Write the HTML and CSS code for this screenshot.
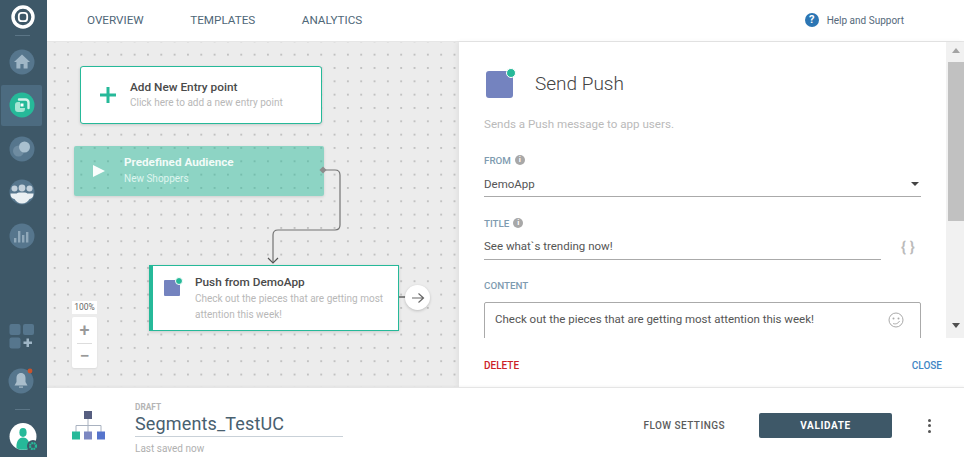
FILE: index.html
```html
<!DOCTYPE html>
<html lang="en">
<head>
  <meta charset="UTF-8" />
  <title>Segments_TestUC</title>
  <link rel="stylesheet" href="styles.css">
</head>
<body>
  <div class="app">
    <!-- left menu -->
    <nav class="sidebar">
      <div class="logo">
        <svg width="24" height="24" viewBox="0 0 24 24"><circle cx="12" cy="12" r="10" fill="none" stroke="#fff" stroke-width="3.4"/><rect x="7.8" y="7.8" width="8.4" height="8.4" rx="3" fill="none" stroke="#fff" stroke-width="1.8"/></svg>
      </div>
      <div class="side-sep"></div>
      <div class="side-item">
        <svg width="26" height="26" viewBox="0 0 26 26"><circle cx="13" cy="13" r="12.5" fill="#56768d"/><path d="M13 5.5 5 13h2.4v6.5h4v-4.5h3.2v4.5h4V13H21z" fill="#9fb6c6"/></svg>
      </div>
      <div class="side-item active">
        <svg width="26" height="26" viewBox="0 0 26 26"><circle cx="13" cy="13" r="12.5" fill="#26b999"/><path d="M10 7.500h6.500a3 3 0 0 1 3 3V16" fill="none" stroke="#d2f3ea" stroke-width="2.400" stroke-linecap="round"/><path d="M11 10h-2a3 3 0 0 0-3 3v4a3 3 0 0 0 3 3h4a3 3 0 0 0 3-3v-1h-5z" fill="#a5e6d4"/><rect x="11.500" y="11.500" width="3" height="3" fill="#fff"/></svg>
      </div>
      <div class="side-item">
        <svg width="26" height="26" viewBox="0 0 26 26"><circle cx="13" cy="13" r="12.5" fill="#56768d"/><circle cx="9.500" cy="15" r="5.500" fill="#6f8ca1"/><circle cx="15.500" cy="11" r="5.500" fill="#a9c0cf"/></svg>
      </div>
      <div class="side-item">
        <svg width="26" height="26" viewBox="0 0 26 26"><circle cx="13" cy="13" r="12.5" fill="#56768d"/><circle cx="5.500" cy="9.500" r="3" fill="#c3d1db"/><circle cx="20.500" cy="9.500" r="3" fill="#c3d1db"/><circle cx="13" cy="9" r="3.400" fill="#c3d1db"/><path d="M1.500 14.500h6.200c.8-.8 1.800-1 3-1h4.600c1.200 0 2.200.2 3 1h6.200c0 4-1.800 5-4 5.500-1.500 2.500-4 4.500-7.500 4.500S7 22.500 5.500 20c-2.200-.5-4-1.500-4-5.500z" fill="#eaf0f3"/></svg>
      </div>
      <div class="side-item">
        <svg width="26" height="26" viewBox="0 0 26 26"><circle cx="13" cy="13" r="12.5" fill="#56768d"/><g fill="#8fa8b9"><rect x="5" y="15" width="2.400" height="4.500"/><rect x="9" y="8" width="2.400" height="11.500"/><rect x="13" y="12" width="2.400" height="7.500"/><rect x="17" y="9" width="2.400" height="10.500"/></g></svg>
      </div>
      <div class="side-bottom">
        <div class="side-item plain">
          <svg width="26" height="26" viewBox="0 0 26 26"><g fill="#56768d"><rect x="0.500" y="0" width="11" height="11" rx="2"/><rect x="14" y="0" width="11" height="11" rx="2"/><rect x="0.500" y="13.500" width="11" height="11" rx="2"/></g><path d="M17.500 14.500h2.500v3h3V20h-3v3h-2.500v-3h-3v-2.500h3z" fill="#9fb6c6"/></svg>
        </div>
        <div class="side-item bell">
          <svg width="28" height="28" viewBox="0 0 28 28"><circle cx="13" cy="15" r="12.500" fill="#56768d"/><path d="M13 7c-3.200 0-4.500 2.500-4.500 5v4L6.500 19.500h13L17.500 16v-4c0-2.500-1.300-5-4.500-5z" fill="#a9bdcb"/><rect x="11" y="20.500" width="4" height="1.200" fill="#a9bdcb"/><circle cx="22" cy="5" r="2.400" fill="#c9532c"/></svg>
        </div>
        <div class="side-sep low"></div>
        <div class="avatar">
          <svg width="32" height="32" viewBox="0 0 32 32"><circle cx="14" cy="14.500" r="13.500" fill="#fff"/><ellipse cx="14" cy="10.500" rx="3.600" ry="4.400" fill="#26b999"/><path d="M7.500 26c-.5-6 2-10.500 6.500-10.500s7 4.500 6.500 10.500c-2 1.500-4 1.800-6.500 1.800s-4.500-.3-6.500-1.800z" fill="#26b999"/><circle cx="24" cy="24" r="6" fill="#3e5868"/><circle cx="24" cy="24" r="3" fill="none" stroke="#26b999" stroke-width="2.200" stroke-dasharray="1.800 .6"/></svg>
        </div>
      </div>
    </nav>

    <div class="main">
      <header class="topbar">
        <div class="tabs">
          <a class="tab">OVERVIEW</a>
          <a class="tab">TEMPLATES</a>
          <a class="tab">ANALYTICS</a>
        </div>
        <div class="help">
          <span class="help-icon">?</span>
          <span>Help and Support</span>
        </div>
      </header>

      <div class="work">
        <!-- flow canvas -->
        <section class="canvas">
          <div class="node entry">
            <span class="entry-plus">
              <svg width="16" height="16" viewBox="0 0 16 16"><path d="M6.500 0h3v6.500H16v3H9.500V16h-3V9.500H0v-3h6.500z" fill="#26b999"/></svg>
            </span>
            <div>
              <div class="node-title">Add New Entry point</div>
              <div class="node-sub">Click here to add a new entry point</div>
            </div>
          </div>

          <div class="node audience">
            <span class="play"></span>
            <div>
              <div class="node-title">Predefined Audience</div>
              <div class="node-sub">New Shoppers</div>
            </div>
          </div>

          <svg class="wires" width="412" height="345" viewBox="0 0 412 345">
            <path d="M276 128h12q5 0 5 5v50q0 5-5 5h-57q-5 0-5 5v28" fill="none" stroke="#737373" stroke-width="1.200"/>
            <path d="M221 216l5 5 5-5" fill="none" stroke="#555" stroke-width="1.200"/>
            <rect x="273.500" y="125.500" width="5" height="5" transform="rotate(45 276 128)" fill="#8d8d8d"/>
            <path d="M352 255h7" stroke="#444" stroke-width="1.200"/>
          </svg>

          <div class="node push">
            <span class="push-icon small"></span>
            <div>
              <div class="node-title">Push from DemoApp</div>
              <div class="node-sub">Check out the pieces that are getting most<br>attention this week!</div>
            </div>
          </div>

          <div class="next">
            <svg width="14" height="12" viewBox="0 0 14 12"><path d="M1 6h11M7.500 1.500 12.500 6l-5 4.500" fill="none" stroke="#666" stroke-width="1.200"/></svg>
          </div>

          <div class="zoom">
            <div class="zoom-level">100%</div>
            <div class="zoom-btns">
              <span class="zoom-btn">+</span>
              <span class="zoom-line"></span>
              <span class="zoom-btn">&minus;</span>
            </div>
          </div>
        </section>

        <!-- settings of the selected step -->
        <aside class="panel">
          <div class="panel-scroll">
            <div class="panel-body">
              <div class="panel-head">
                <span class="push-icon"></span>
                <h2>Send Push</h2>
              </div>
              <p class="panel-desc">Sends a Push message to app users.</p>

              <label class="field-label">FROM <span class="info">i</span></label>
              <div class="select">
                <span>DemoApp</span>
                <span class="caret"></span>
              </div>

              <label class="field-label title-label">TITLE <span class="info">i</span></label>
              <div class="title-row">
                <div class="text-line">See what`s trending now!</div>
                <span class="braces">{ }</span>
              </div>

              <label class="field-label content-label">CONTENT</label>
              <div class="textbox">
                <span>Check out the pieces that are getting most attention this week!</span>
                <svg width="16" height="16" viewBox="0 0 16 16"><circle cx="8" cy="8" r="7" fill="none" stroke="#aaa" stroke-width="1"/><circle cx="5.500" cy="6.500" r="1" fill="#aaa"/><circle cx="10.500" cy="6.500" r="1" fill="#aaa"/><path d="M5 11.500c2 .8 5 .5 6.500-2.500" fill="none" stroke="#aaa"/></svg>
              </div>
            </div>
            <div class="scrollbar">
              <span class="arrow up"></span>
              <span class="thumb"></span>
              <span class="arrow down"></span>
            </div>
          </div>
          <div class="panel-foot">
            <a class="delete">DELETE</a>
            <a class="close">CLOSE</a>
          </div>
        </aside>
      </div>

      <footer class="bottombar">
        <svg class="flow-icon" width="33" height="29" viewBox="0 0 33 29">
          <path d="M16 8v13M4 21v-6.500h25V21" fill="none" stroke="#a9b2c0" stroke-width="1"/>
          <rect x="12" y="0" width="8" height="8" fill="#565e80"/>
          <rect x="0" y="20.500" width="8" height="8" fill="#26b999"/>
          <rect x="12" y="20.500" width="8" height="8" fill="#7c88c2"/>
          <rect x="25" y="20.500" width="8" height="8" fill="#5674cc"/>
        </svg>
        <div class="flow-name">
          <div class="draft">DRAFT</div>
          <div class="flow-title">Segments_TestUC</div>
          <div class="saved">Last saved now</div>
        </div>
        <div class="actions">
          <a class="settings">FLOW SETTINGS</a>
          <button class="validate">VALIDATE</button>
          <span class="dots"><i></i><i></i><i></i></span>
        </div>
      </footer>
    </div>
  </div>
</body>
</html>
```

FILE: styles.css
```css
* { box-sizing: border-box; }
html, body { margin: 0; height: 100%; overflow: hidden; }
body { font-family: Roboto, Arial, sans-serif; background: #fff; color: #444; }
.app { display: flex; width: 964px; height: 457px; }

/* left menu */
.sidebar { width: 47px; flex: none; background: #3e5868; display: flex; flex-direction: column; align-items: stretch; padding: 5px 0 0 1px; }
.logo { height: 24px; display: flex; justify-content: center; padding-right: 2px; }
.side-sep { width: 15px; height: 1px; background: #5b7586; margin: 6px 0 0 14px; }
.side-item { height: 41px; width: 41px; margin-top: 2.600px; display: flex; align-items: center; justify-content: center; border-radius: 2px; flex: none; }
.side-sep + .side-item { margin-top: 5px; }
.side-item.active { background: #4c6b80; }
.side-bottom { margin-top: auto; display: flex; flex-direction: column; }
.side-item.plain { height: 26px; margin: 0 0 16px; }
.side-item.bell { height: 28px; margin: 0 0 15px; padding-left: 1px; }
.side-sep.low { margin: 0 0 12px 14px; }
.avatar { height: 35px; padding-left: 8px; }

.main { flex: 1; min-width: 0; display: flex; flex-direction: column; }

/* top bar */
.topbar { height: 42px; flex: none; display: flex; align-items: center; justify-content: space-between; padding: 0 60px 1px 40px; border-bottom: 1px solid #e6e6e6; }
.tabs { display: flex; gap: 46.500px; }
.tab { font-size: 11.700px; color: #4f6778; }
.help { display: flex; align-items: center; gap: 8px; font-size: 10px; color: #55697a; }
.help-icon { width: 14px; height: 14px; border-radius: 50%; background: #2c76b4; color: #fff; font-size: 11px; font-weight: 700; text-align: center; line-height: 14px; }

.work { flex: 1; min-height: 0; display: flex; }

/* flow canvas */
.canvas { position: relative; width: 412px; flex: none; background-color: #ececec; background-image: radial-gradient(circle, #a2a2a2 0.5px, transparent 0.9px); background-size: 13.33px 13.33px; background-position: 1px 6px; overflow: hidden; }
.node { position: absolute; display: flex; align-items: center; }
.node-title { font-size: 11.800px; font-weight: 500; color: #4a4a4a; }
.node-sub { font-size: 10px; color: #b8b8b8; margin-top: 4px; line-height: 16px; }
.entry { left: 33px; top: 24px; width: 242px; height: 58px; background: #fff; border: 1px solid #26b999; border-radius: 3px; box-shadow: 0 1px 3px rgba(0,0,0,.15); padding-left: 19px; gap: 14px; }
.entry-plus { display: flex; }
.entry .node-sub { margin-top: 1px; }
.audience { left: 27px; top: 104px; width: 250px; height: 50px; background: rgba(38,185,153,.48); border-radius: 2px; box-shadow: 0 1px 3px rgba(0,0,0,.12); padding: 0 0 0 19px; gap: 19px; }
.audience .node-title { color: #f2fbf8; font-weight: 700; font-size: 11.700px; }
.audience .node-sub { color: #dff5ef; margin-top: 2px; }
.play { width: 0; height: 0; border-left: 12px solid #fbfefd; border-top: 6px solid transparent; border-bottom: 6px solid transparent; }
.wires { position: absolute; left: 0; top: 0; }
.push { left: 102px; top: 223px; width: 250px; height: 66px; background: #fff; border: 1px solid #26b999; border-left: 4px solid #26b999; box-shadow: 0 1px 3px rgba(0,0,0,.15); padding-left: 11px; gap: 15px; align-items: flex-start; padding-top: 9px; }
.push .node-sub { margin-top: 2px; }
.next { position: absolute; left: 358px; top: 243px; width: 25px; height: 25px; border-radius: 50%; background: #fff; box-shadow: 0 1px 3px rgba(0,0,0,.2); display: flex; align-items: center; justify-content: center; }
.zoom { position: absolute; left: 25px; top: 259px; width: 25px; }
.zoom-level { height: 13px; background: #fff; font-size: 8.500px; text-align: center; line-height: 13px; color: #666; margin-bottom: 3px; }
.zoom-btns { height: 51px; background: #fff; border-radius: 2px; display: flex; flex-direction: column; align-items: center; justify-content: space-between; padding: 4px 0 3px; box-shadow: 0 1px 2px rgba(0,0,0,.08); }
.zoom-btn { font-size: 18px; line-height: 18px; color: #999; font-weight: 500; }
.zoom-line { width: 15px; height: 1px; background: #ddd; }

/* step settings */
.panel { position: relative; flex: 1; min-width: 0; display: flex; flex-direction: column; background: #fff; box-shadow: -2px 0 5px rgba(0,0,0,.05); }
.panel-scroll { height: 296px; flex: none; display: flex; overflow: hidden; }
.panel-body { flex: 1; min-width: 0; padding: 26px 25px 0 25px; }
.panel-head { display: flex; align-items: center; gap: 22px; height: 30px; }
.push-icon { position: relative; display: block; width: 27px; height: 27px; flex: none; background: #7483bf; border-radius: 3px; margin: 3px 0 0 2px; }
.push-icon::after { content: ""; position: absolute; right: -3px; top: -3px; width: 8px; height: 8px; border-radius: 50%; background: #26b999; border: 1px solid #fff; }
.push-icon.small { width: 16px; height: 16px; margin: 5px 0 0; border-radius: 1px; }
.push-icon.small::after { width: 6px; height: 6px; right: -3px; top: -3px; }
h2 { margin: 0; font-size: 19px; font-weight: 300; color: #444; }
.panel-desc { margin: 19px 0 0; font-size: 11.600px; color: #bababa; }
.field-label { display: flex; align-items: center; gap: 4px; font-size: 9.800px; font-weight: 500; color: #7e9bb0; margin-top: 23px; height: 12px; }
.info { width: 10px; height: 10px; border-radius: 50%; background: #a8a8a8; color: #fff; font-size: 8px; font-weight: 700; text-align: center; line-height: 10px; }
.select { display: flex; justify-content: space-between; align-items: center; height: 25px; margin-top: 6px; border-bottom: 1px solid #aaa; font-size: 11.500px; color: #555; padding-right: 1px; }
.caret { width: 0; height: 0; border-top: 4px solid #444; border-left: 4px solid transparent; border-right: 4px solid transparent; margin-right: 1px; }
.title-label { margin-top: 20px; }
.title-row { display: flex; align-items: center; gap: 20px; margin-top: 5px; }
.text-line { flex: 1; height: 26px; line-height: 24px; border-bottom: 1px solid #aaa; font-size: 11.500px; color: #555; }
.braces { font-size: 15px; font-weight: 700; color: #bbb; width: 16px; margin-right: 4px; white-space: nowrap; }
.content-label { margin-top: 19px; }
.textbox { display: flex; justify-content: space-between; align-items: flex-start; height: 60px; margin-top: 11px; border: 1px solid #aaa; border-radius: 2px; padding: 9px 16px 0 10px; font-size: 11.500px; color: #555; }
.scrollbar { width: 18px; flex: none; background: #f1f1f1; display: flex; flex-direction: column; align-items: center; padding: 0 0 0 2px; position: relative; }
.thumb { width: 16px; height: 159px; background: #c1c1c1; margin-top: 9px; flex: none; }
.arrow { width: 0; height: 0; flex: none; border-left: 4.500px solid transparent; border-right: 4.500px solid transparent; }
.arrow.up { border-bottom: 5px solid #a3a3a3; margin-top: 6px; }
.arrow.down { border-top: 5px solid #505050; margin-top: 102px; }
.panel-foot { flex: 1; display: flex; justify-content: space-between; align-items: center; padding: 6px 22px 0 25px; font-size: 10px; font-weight: 500; }
.delete { color: #cc2127; }
.close { color: #3f86c4; }

/* bottom bar */
.bottombar { height: 70px; flex: none; border-top: 1px solid #e5e5e5; display: flex; align-items: center; padding: 6px 0 0 25px; background: #fff; position: relative; box-shadow: 0 -1px 2px rgba(0,0,0,.04); }
.flow-icon { flex: none; }
.flow-name { margin: 7px 0 0 30px; width: 208px; }
.draft { font-size: 8.300px; line-height: 9px; font-weight: 700; color: #b5b5b5; }
.flow-title { font-size: 18px; color: #48606f; line-height: 24px; letter-spacing: .15px; border-bottom: 1px solid #c9d1d8; }
.saved { font-size: 10px; line-height: 12px; color: #b0b0b0; margin-top: 6px; }
.actions { margin-left: auto; display: flex; align-items: center; }
.settings { font-size: 10px; font-weight: 500; color: #5c5c5c; letter-spacing: .45px; margin-right: 34px; }
.validate { width: 133px; height: 25px; border: 0; border-radius: 2px; background: #3e5868; color: #fff; font: 700 10px Roboto, Arial, sans-serif; letter-spacing: .6px; }
.dots { display: flex; flex-direction: column; gap: 2.500px; margin: 0 33px 0 36px; }
.dots i { display: block; width: 3px; height: 3px; border-radius: 50%; background: #555; }
```
